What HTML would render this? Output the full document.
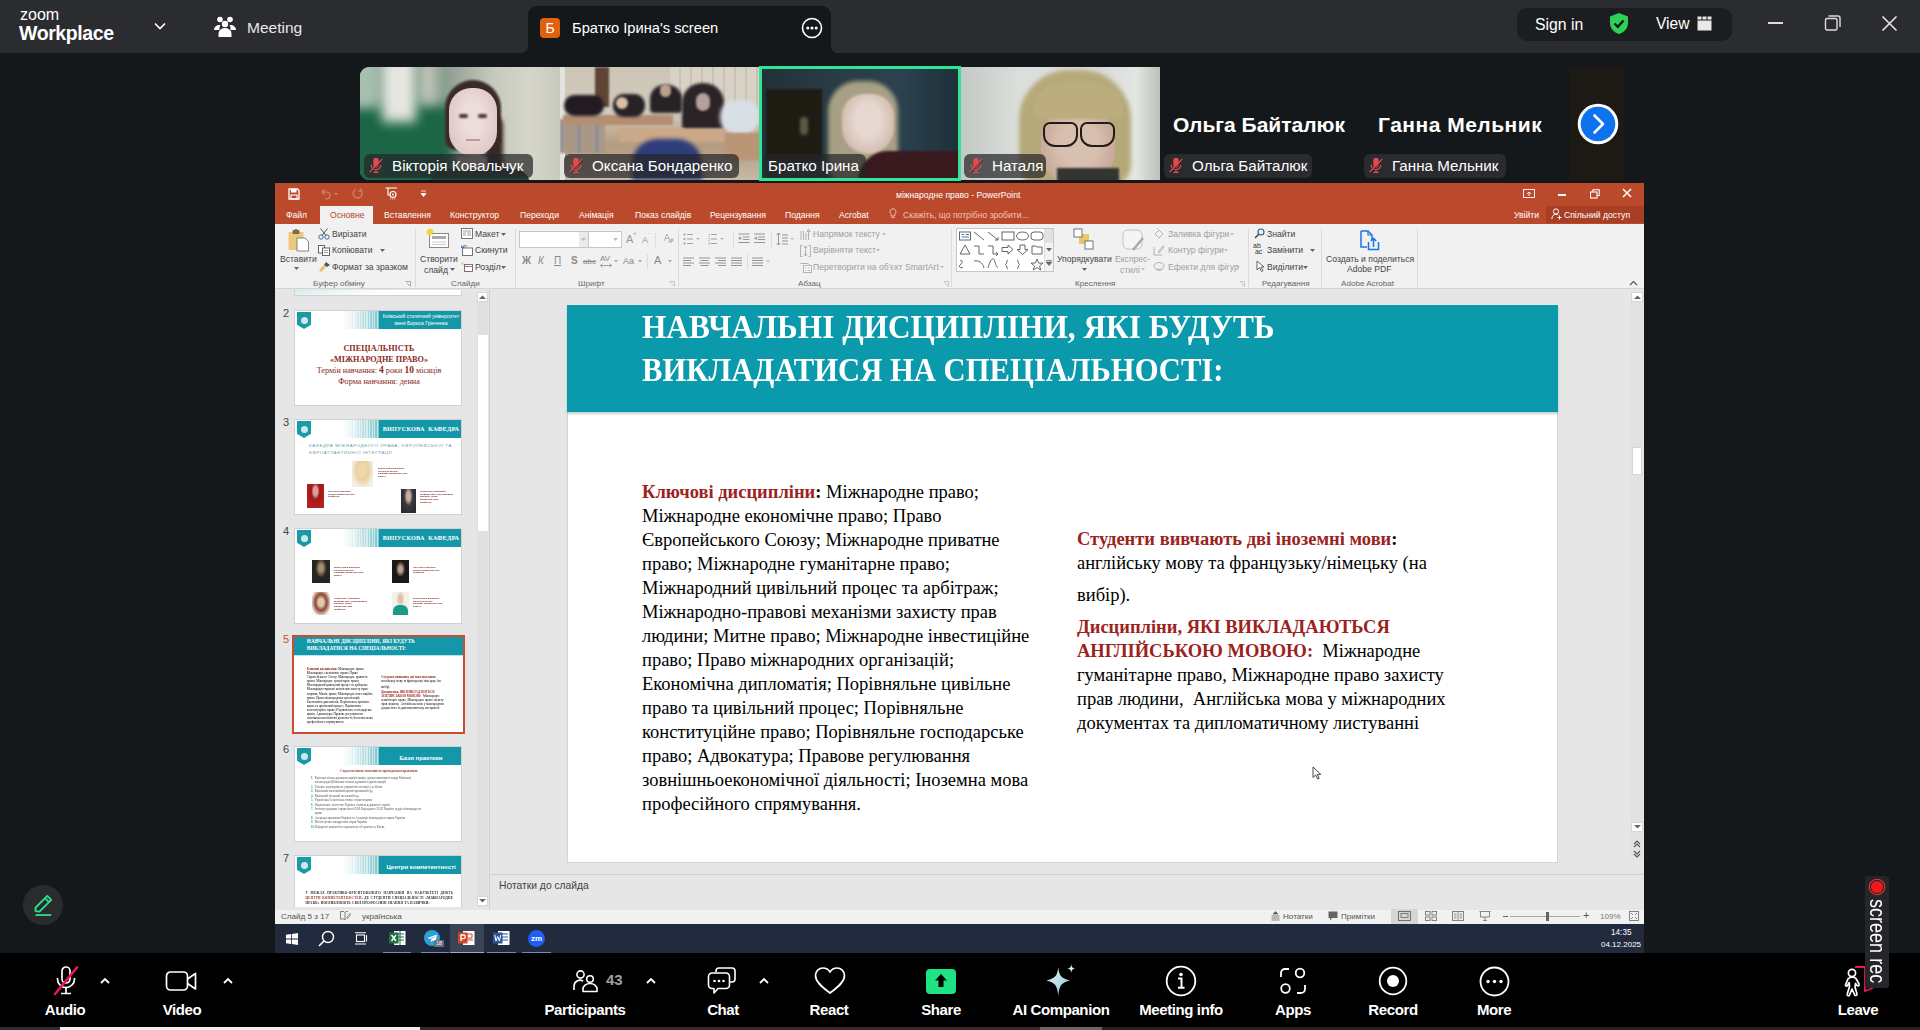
<!DOCTYPE html>
<html><head><meta charset="utf-8">
<style>
*{margin:0;padding:0;box-sizing:border-box}
html,body{width:1920px;height:1030px;overflow:hidden;background:#15181b;font-family:"Liberation Sans",sans-serif}
.a{position:absolute}
.t{position:absolute;white-space:nowrap;line-height:1.15}
#top{left:0;top:0;width:1920px;height:53px;background:#2b2c2f}
#tab{left:528px;top:6px;width:303px;height:47px;background:#15181b;border-radius:9px 9px 0 0}
.tile{position:absolute;top:67px;height:113px;width:200px;overflow:hidden}
.nm{position:absolute;height:24px;border-radius:6px;background:rgba(38,38,40,.72);color:#fff;font-size:15.2px;line-height:24px;padding-left:28px;white-space:nowrap;overflow:hidden}
.nm .mic{position:absolute;left:4px;top:4px;width:16px;height:16px}
#bot{left:0;top:953px;width:1920px;height:74px;background:#000}
.bl{position:absolute;top:1000px;color:#fff;font-size:15px;font-weight:bold;white-space:nowrap;transform:translateX(-50%);line-height:20px;letter-spacing:-0.4px}
.pt{font-size:8.6px}
.rb{font-size:8.6px;color:#444}
.gl{font-size:8.1px;color:#666}
.dis{color:#a0a0a0}
.sep{top:229px;width:1px;height:58px;background:#dadada}
.num{font-size:11px;color:#444}
.th{width:168px;height:96px;background:#fff;border:1px solid #d2d2d2;overflow:hidden}
.th .lg{position:absolute;left:2px;top:1px;width:14px;height:17px;background:#1a9aa8;clip-path:polygon(0 0,100% 0,100% 75%,50% 100%,0 75%)}
.th .lg::after{content:"";position:absolute;left:3.5px;top:5px;width:7px;height:7px;border-radius:50%;background:#cfe8ea}
.th .st{position:absolute;left:48px;top:0;width:36px;height:18px;background:repeating-linear-gradient(90deg,rgba(255,255,255,.55) 0 1.2px,rgba(255,255,255,0) 1.2px 2.6px),linear-gradient(90deg,#fff 0%,#d8eef0 35%,#7cc4cc 100%)}
.th .hb{position:absolute;left:84px;top:0;width:84px;height:18px;background:#1497a8;color:#fff;text-align:center;white-space:nowrap;overflow:hidden}
.tx{height:16px;background:repeating-linear-gradient(180deg,rgba(140,60,60,.55) 0 1px,transparent 1px 4px)}
.lines{background:repeating-linear-gradient(180deg,rgba(120,120,120,.6) 0 1px,transparent 1px 3.7px)}
.ttl{font-family:"Liberation Serif",serif;font-weight:bold;color:#fff;font-size:33.5px;letter-spacing:0px;line-height:40px}
.bd{font-family:"Liberation Serif",serif;font-size:18.5px;line-height:24px;color:#000;white-space:nowrap}
.bd b{font-weight:bold}
.red{color:#9c231d}
.sb{font-size:8.1px;color:#555}
</style></head><body>
<svg width="0" height="0" style="position:absolute"><defs><g id="micx"><path d="M6 2.5 a3 3 0 0 1 6 0 V8 a3 3 0 0 1 -6 0 Z" fill="#e5484d"/><path d="M3.5 7.5 a5.5 5.5 0 0 0 11 0 M9 13 V16 M6 16.3 H12" fill="none" stroke="#e5484d" stroke-width="1.4"/><path d="M2 16 L16 1.5" stroke="#e5484d" stroke-width="1.6"/><path d="M2.8 16.8 L16.8 2.3" stroke="rgba(38,38,40,.9)" stroke-width="1"/></g></defs></svg>
<!-- ===== ZOOM TOP BAR ===== -->
<div id="top" class="a"></div>
<div class="t" style="left:20px;top:6px;font-size:16px;color:#fff;letter-spacing:0px">zoom</div>
<div class="t" style="left:19px;top:22px;font-size:19.5px;color:#fff;font-weight:bold;letter-spacing:-0.4px">Workplace</div>
<svg class="a" style="left:153px;top:20px" width="14" height="12" viewBox="0 0 14 12"><path d="M2 3.5 L7 8.5 L12 3.5" stroke="#fff" stroke-width="1.6" fill="none"/></svg>
<svg class="a" style="left:213px;top:15px" width="24" height="24" viewBox="0 0 24 24"><g fill="#fff"><circle cx="7" cy="4.5" r="2.8"/><circle cx="17" cy="4.5" r="2.8"/><circle cx="12" cy="9" r="3.2"/><path d="M1 15c0-3 2.5-5 6-5h0.5c-0.6 0.9-1 2-1 3.5v1.5z"/><path d="M23 15c0-3-2.5-5-6-5h-0.5c0.6 0.9 1 2 1 3.5v1.5z"/><path d="M5.5 22v-3c0-3.5 2.8-6 6.5-6s6.5 2.5 6.5 6v3z"/></g></svg>
<div class="t" style="left:247px;top:19px;font-size:15.5px;color:#e8e8e8">Meeting</div>
<div id="tab" class="a"></div>
<div class="a" style="left:520px;top:45px;width:8px;height:8px;background:radial-gradient(circle at 0 0,#2b2c2f 8px,#15181b 8.5px)"></div>
<div class="a" style="left:831px;top:45px;width:8px;height:8px;background:radial-gradient(circle at 100% 0,#2b2c2f 8px,#15181b 8.5px)"></div>
<div class="a" style="left:540px;top:18px;width:20px;height:20px;border-radius:4px;background:#e0620f;color:#fff;font-size:14px;line-height:20px;text-align:center">Б</div>
<div class="t" style="left:572px;top:20px;font-size:14.7px;color:#fff">Братко Ірина's screen</div>
<svg class="a" style="left:801px;top:17px" width="22" height="22" viewBox="0 0 22 22"><circle cx="11" cy="11" r="9.5" stroke="#fff" stroke-width="1.6" fill="none"/><circle cx="6.8" cy="11" r="1.5" fill="#fff"/><circle cx="11" cy="11" r="1.5" fill="#fff"/><circle cx="15.2" cy="11" r="1.5" fill="#fff"/></svg>
<div class="a" style="left:1517px;top:8px;width:215px;height:33px;border-radius:10px;background:#1c1d20"></div>
<div class="t" style="left:1535px;top:16px;font-size:15.8px;color:#fff">Sign in</div>
<svg class="a" style="left:1608px;top:12px" width="22" height="23" viewBox="0 0 22 23"><path d="M11 1 L20 4.5 V11 C20 16.5 16 20.5 11 22 C6 20.5 2 16.5 2 11 V4.5 Z" fill="#2ed158"/><path d="M6.5 11.5 L9.8 14.8 L15.5 8.5" stroke="#111" stroke-width="2.2" fill="none"/></svg>
<div class="t" style="left:1656px;top:15px;font-size:15.6px;color:#fff">View</div>
<svg class="a" style="left:1697px;top:16px" width="15" height="15" viewBox="0 0 15 15"><rect x="0.5" y="4.5" width="14" height="10" fill="#e8e8e8"/><rect x="0.5" y="0.5" width="4" height="3" fill="#e8e8e8"/><rect x="5.5" y="0.5" width="4" height="3" fill="#e8e8e8"/><rect x="10.5" y="0.5" width="4" height="3" fill="#e8e8e8"/></svg>
<div class="a" style="left:1768px;top:22px;width:15px;height:1.5px;background:#ddd"></div>
<svg class="a" style="left:1824px;top:14px" width="18" height="18" viewBox="0 0 18 18"><rect x="1.5" y="4.5" width="11.5" height="11.5" rx="1.5" stroke="#ddd" stroke-width="1.4" fill="none"/><path d="M4.5 2 H14 a2 2 0 0 1 2 2 V13" stroke="#ddd" stroke-width="1.4" fill="none"/></svg>
<svg class="a" style="left:1881px;top:15px" width="17" height="17" viewBox="0 0 17 17"><path d="M1.5 1.5 L15.5 15.5 M15.5 1.5 L1.5 15.5" stroke="#e6e6e6" stroke-width="1.6"/></svg>

<!-- ===== VIDEO STRIP ===== -->
<div class="tile" style="left:360px;border-radius:9px 0 0 9px;background:linear-gradient(90deg,#7a9c8a 0%,#5c8a72 30%,#9aa69a 48%,#c6c9bd 66%,#d6d5c9 85%,#c8cabe 100%)">
  <div class="a" style="left:-12px;top:38px;width:105px;height:95px;background:#1b6646;filter:blur(6px)"></div>
  <div class="a" style="left:-12px;top:-10px;width:30px;height:50px;background:#a8c0b0;filter:blur(6px)"></div>
  <div class="a" style="left:22px;top:-10px;width:34px;height:65px;background:#e6e6e0;filter:blur(6px)"></div>
  <div class="a" style="left:58px;top:-8px;width:20px;height:45px;background:#bcc2b6;filter:blur(6px)"></div>
  <div class="a" style="left:85px;top:13px;width:56px;height:70px;border-radius:28px 28px 10px 10px;background:#3c2a28;filter:blur(1px)"></div>
  <div class="a" style="left:125px;top:50px;width:18px;height:60px;border-radius:8px;background:#3a2826;filter:blur(2px)"></div>
  <div class="a" style="left:89px;top:21px;width:48px;height:68px;border-radius:24px 24px 26px 26px;background:radial-gradient(ellipse at 50% 45%,#ecdcdc 30%,#dcc4c0 85%);filter:blur(0.6px)"></div>
  <div class="a" style="left:97px;top:90px;width:30px;height:15px;background:#d8c0bc;filter:blur(1px)"></div>
  <div class="a" style="left:99px;top:47px;width:9px;height:4px;border-radius:3px;background:#4a3434;filter:blur(0.8px)"></div>
  <div class="a" style="left:118px;top:47px;width:9px;height:4px;border-radius:3px;background:#4a3434;filter:blur(0.8px)"></div>
  <div class="a" style="left:106px;top:72px;width:14px;height:2px;background:#c09898;filter:blur(0.6px)"></div>
  <div class="a" style="left:70px;top:102px;width:100px;height:16px;border-radius:40px 40px 0 0;background:#24403a"></div>
</div>
<div class="tile" style="left:560px;background:linear-gradient(180deg,#cdc5b6 0%,#d2cbbd 40%,#c4b09a 55%,#b49a80 70%,#c6baa8 100%)">
  <div class="a" style="left:0;top:0;width:5px;height:113px;background:#e2e2de"></div>
  <div class="a" style="left:110px;top:0;width:90px;height:48px;background:repeating-linear-gradient(90deg,#d8d2c6 0 9px,#c8c1b4 9px 11px)"></div>
  <div class="a" style="left:35px;top:0;width:14px;height:40px;background:#5e4434;filter:blur(1px)"></div>
  <div class="a" style="left:0px;top:52px;width:45px;height:34px;background:repeating-linear-gradient(90deg,#8088a0 0 2px,#a89888 2px 18px);filter:blur(1px)"></div>
  <div class="a" style="left:3px;top:48px;width:110px;height:10px;background:#b48e72;filter:blur(1px)"></div>
  <div class="a" style="left:4px;top:28px;width:40px;height:21px;border-radius:11px;background:#221c22;filter:blur(1.5px)"></div>
  <div class="a" style="left:53px;top:27px;width:32px;height:23px;border-radius:11px;background:#262226;filter:blur(1.5px)"></div>
  <div class="a" style="left:56px;top:30px;width:12px;height:12px;border-radius:6px;background:#d8c0a8;filter:blur(1px)"></div>
  <div class="a" style="left:90px;top:18px;width:32px;height:28px;border-radius:14px 14px 4px 4px;background:#262226;filter:blur(1.5px)"></div>
  <div class="a" style="left:100px;top:17px;width:11px;height:13px;border-radius:6px;background:#bca090;filter:blur(1px)"></div>
  <div class="a" style="left:122px;top:16px;width:42px;height:50px;border-radius:20px 20px 8px 8px;background:#2a2428;filter:blur(1.5px)"></div>
  <div class="a" style="left:136px;top:26px;width:14px;height:18px;border-radius:7px;background:#b8a09a;filter:blur(1px)"></div>
  <div class="a" style="left:160px;top:33px;width:40px;height:34px;border-radius:16px;background:#d8dfe6;filter:blur(2px)"></div>
  <div class="a" style="left:60px;top:61px;width:105px;height:14px;background:#caa888;filter:blur(1px)"></div>
  <div class="a" style="left:165px;top:66px;width:35px;height:27px;background:#b89676;filter:blur(1px)"></div>
  <div class="a" style="left:72px;top:72px;width:70px;height:41px;border-radius:25px 25px 0 0;background:#2e3e7a;filter:blur(2px)"></div>
</div>
<div class="a" style="left:759px;top:66px;width:202px;height:115px;border:3px solid #2fe596;background:linear-gradient(90deg,#223238 0%,#2a3c46 40%,#2c4250 70%,#1e3038 100%);overflow:hidden">
  <div class="a" style="left:4px;top:20px;width:56px;height:72px;background:#1e1c12;filter:blur(1px)"></div>
  <div class="a" style="left:38px;top:48px;width:8px;height:18px;border-radius:4px;background:#5a5a44;filter:blur(1.5px)"></div>
  <div class="a" style="left:66px;top:12px;width:70px;height:100px;border-radius:30px 30px 14px 14px;background:#a8a084;filter:blur(2px)"></div>
  <div class="a" style="left:80px;top:25px;width:52px;height:60px;border-radius:22px 22px 26px 26px;background:radial-gradient(ellipse at 50% 45%,#e6d8d0 35%,#cdb4a4 85%);filter:blur(1px)"></div>
  <div class="a" style="left:96px;top:82px;width:115px;height:40px;border-radius:30px 0 0 0;background:#3a1a1e;filter:blur(1px)"></div>
</div>
<div class="tile" style="left:961px;width:199px;background:linear-gradient(90deg,#c4c8c4 0%,#dcdfdb 30%,#d6dad6 70%,#e4e6e2 88%,#bdbfbb 100%)">
  <div class="a" style="left:58px;top:3px;width:112px;height:118px;border-radius:50px 50px 24px 24px;background:#b6a979;filter:blur(2px)"></div>
  <div class="a" style="left:80px;top:42px;width:74px;height:78px;border-radius:30px 30px 36px 36px;background:radial-gradient(ellipse at 50% 45%,#d8c0b0 35%,#c2a290 85%)"></div>
  <div class="a" style="left:72px;top:16px;width:90px;height:36px;border-radius:40px 40px 12px 12px;background:#bcad7e;filter:blur(1px)"></div>
  <div class="a" style="left:82px;top:55px;width:35px;height:25px;border:2.5px solid #241b18;border-radius:7px 7px 12px 12px"></div>
  <div class="a" style="left:119px;top:55px;width:35px;height:25px;border:2.5px solid #241b18;border-radius:7px 7px 12px 12px"></div>
  <div class="a" style="left:96px;top:101px;width:62px;height:14px;background:#343432;filter:blur(1px)"></div>
</div>
<div class="t" style="left:1173px;top:113px;font-size:21px;font-weight:bold;color:#fff">Ольга Байталюк</div>
<div class="t" style="left:1378px;top:113px;font-size:21px;font-weight:bold;color:#fff;letter-spacing:0.5px">Ганна Мельник</div>
<div class="a" style="left:1570px;top:67px;width:54px;height:113px;background:#1d1915"></div>
<svg class="a" style="left:1576px;top:102px" width="44" height="44" viewBox="0 0 44 44"><circle cx="22" cy="22" r="20.3" fill="#fff"/><circle cx="22" cy="22" r="17.3" fill="#0e72ed"/><g transform="translate(1,1)"><path d="M17.5 12.5 L26 21 L17.5 29.5" stroke="#fff" stroke-width="2.6" fill="none" stroke-linecap="round" stroke-linejoin="round"/></g></svg>
<!-- name labels -->
<div class="nm" style="left:364px;top:154px;width:169px"><svg class="mic" viewBox="0 0 18 18"><use href="#micx"/></svg>Вікторія Ковальчук</div>
<div class="nm" style="left:564px;top:154px;width:175px">Оксана Бондаренко<svg class="mic" viewBox="0 0 18 18"><use href="#micx"/></svg></div>
<div class="nm" style="left:764px;top:154px;width:102px;padding-left:4px">Братко Ірина</div>
<div class="nm" style="left:964px;top:154px;width:82px">Наталя<svg class="mic" viewBox="0 0 18 18"><use href="#micx"/></svg></div>
<div class="nm" style="left:1164px;top:154px;width:148px;background:#2a2b2e">Ольга Байталюк<svg class="mic" viewBox="0 0 18 18"><use href="#micx"/></svg></div>
<div class="nm" style="left:1364px;top:154px;width:142px;background:#2a2b2e">Ганна Мельник<svg class="mic" viewBox="0 0 18 18"><use href="#micx"/></svg></div>
<!-- ===== POWERPOINT ===== -->
<div class="a" style="left:275px;top:183px;width:1369px;height:741px;background:#e6e6e6"></div>
<div class="a" style="left:275px;top:183px;width:1369px;height:41px;background:#bb4a2d"></div>
<!-- QAT -->
<svg class="a" style="left:288px;top:188px" width="12" height="12" viewBox="0 0 12 12"><path d="M1 1 H9.5 L11 2.5 V11 H1 Z" fill="none" stroke="#fff" stroke-width="1.3"/><rect x="3" y="1" width="5.5" height="3.5" fill="#fff"/><rect x="3" y="7" width="6" height="4" fill="none" stroke="#fff" stroke-width="1.1"/></svg>
<svg class="a" style="left:319px;top:188px" width="22" height="12" viewBox="0 0 22 12"><path d="M3 4 H7.5 a3.5 3.5 0 0 1 0 7 H6 M3 4 L5.5 1.5 M3 4 L5.5 6.5" fill="none" stroke="#d9836c" stroke-width="1.2"/><path d="M15 5 L17 7 L19 5 Z" fill="#d9836c"/></svg>
<svg class="a" style="left:352px;top:187px" width="12" height="13" viewBox="0 0 12 13"><path d="M9 3.5 A4.5 4.5 0 1 1 4 2.2 M9 1 V4 H6" fill="none" stroke="#d9836c" stroke-width="1.2"/></svg>
<svg class="a" style="left:385px;top:187px" width="13" height="13" viewBox="0 0 13 13"><path d="M0.5 1 H12 M3 1 V8 H4.5" fill="none" stroke="#fff" stroke-width="1.1"/><circle cx="8" cy="7.5" r="3" fill="none" stroke="#fff" stroke-width="1.1"/><circle cx="8" cy="7.5" r="1" fill="#fff"/><path d="M5 12 H11" stroke="#fff" stroke-width="0.8" stroke-dasharray="1 1"/></svg>
<svg class="a" style="left:420px;top:190px" width="7" height="8" viewBox="0 0 7 8"><path d="M1 1 H6 M1 3.5 L3.5 6.5 L6 3.5 Z" fill="#fff" stroke="#fff" stroke-width="0.8"/></svg>
<div class="t" style="left:896px;top:191px;font-size:8.6px;color:#fff">міжнародне право - PowerPoint</div>
<svg class="a" style="left:1523px;top:189px" width="12" height="10" viewBox="0 0 12 10"><rect x="0.5" y="0.5" width="11" height="8" fill="none" stroke="#fff" stroke-width="0.9"/><path d="M6 7 V3 M4 5 L6 3 L8 5" fill="none" stroke="#fff" stroke-width="0.9"/></svg>
<div class="a" style="left:1558px;top:194px;width:8px;height:1.5px;background:#fff"></div>
<svg class="a" style="left:1590px;top:189px" width="10" height="10" viewBox="0 0 10 10"><rect x="0.5" y="3" width="6.5" height="6" fill="none" stroke="#fff" stroke-width="1.1"/><path d="M3 3 V0.8 H9.2 V6.5 H7" fill="none" stroke="#fff" stroke-width="1.1"/></svg>
<svg class="a" style="left:1622px;top:188px" width="10" height="10" viewBox="0 0 10 10"><path d="M1 1 L9 9 M9 1 L1 9" stroke="#fff" stroke-width="1.5"/></svg>
<!-- tabs -->
<div class="a" style="left:320px;top:206px;width:53px;height:18px;background:#f1f1f1"></div>
<div class="t pt" style="left:286px;top:211px;color:#fff">Файл</div>
<div class="t pt" style="left:330px;top:211px;color:#b7472a">Основне</div>
<div class="t pt" style="left:384px;top:211px;color:#fff">Вставлення</div>
<div class="t pt" style="left:450px;top:211px;color:#fff">Конструктор</div>
<div class="t pt" style="left:520px;top:211px;color:#fff">Переходи</div>
<div class="t pt" style="left:579px;top:211px;color:#fff">Анімація</div>
<div class="t pt" style="left:635px;top:211px;color:#fff">Показ слайдів</div>
<div class="t pt" style="left:710px;top:211px;color:#fff">Рецензування</div>
<div class="t pt" style="left:785px;top:211px;color:#fff">Подання</div>
<div class="t pt" style="left:839px;top:211px;color:#fff">Acrobat</div>
<svg class="a" style="left:889px;top:208px" width="8" height="11" viewBox="0 0 8 11"><path d="M4 0.8 a3 3 0 0 1 1.8 5.4 V8 H2.2 V6.2 A3 3 0 0 1 4 0.8 Z M2.5 9.5 H5.5" fill="none" stroke="#f2c7b8" stroke-width="0.9"/></svg>
<div class="t pt" style="left:903px;top:211px;color:#f2c4b4">Скажіть, що потрібно зробити...</div>
<div class="t pt" style="left:1514px;top:211px;color:#fff">Увійти</div>
<div class="a" style="left:1546px;top:206px;width:98px;height:17px;background:#a83f25"></div>
<svg class="a" style="left:1551px;top:208px" width="11" height="12" viewBox="0 0 11 12"><circle cx="5" cy="3.5" r="2.6" fill="none" stroke="#fff" stroke-width="1"/><path d="M0.8 11 C1 7.5 3 6.3 5 6.3 C6 6.3 6.8 6.5 7.3 6.9 M6.5 9.5 H10.5 M8.5 7.5 V11.5" fill="none" stroke="#fff" stroke-width="1"/></svg>
<div class="t pt" style="left:1564px;top:211px;color:#fff">Спільний доступ</div>
<!-- ribbon -->
<div class="a" style="left:275px;top:224px;width:1369px;height:65px;background:#f1f1f1;border-bottom:1px solid #d4d4d4"></div>
<div class="a sep" style="left:415px"></div>
<div class="a sep" style="left:515px"></div>
<div class="a sep" style="left:678px"></div>
<div class="a sep" style="left:951px"></div>
<div class="a sep" style="left:1248px"></div>
<div class="a sep" style="left:1321px"></div>
<div class="a sep" style="left:1417px"></div>
<!-- Clipboard group -->
<svg class="a" style="left:287px;top:228px" width="24" height="24" viewBox="0 0 24 24"><rect x="1.5" y="4" width="15" height="18" rx="1" fill="#ebc97a"/><rect x="5.5" y="2" width="7" height="4" rx="1" fill="#7a6a50"/><circle cx="9" cy="2.2" r="1.3" fill="#7a6a50"/><path d="M10 10 H18 L21.5 13.5 V23 H10 Z" fill="#fff" stroke="#777" stroke-width="0.9"/></svg>
<div class="t rb" style="left:280px;top:255px">Вставити</div>
<svg class="a" style="left:294px;top:267px" width="5" height="4"><path d="M0 0 H5 L2.5 3 Z" fill="#666"/></svg>
<svg class="a" style="left:318px;top:228px" width="12" height="12" viewBox="0 0 12 12"><circle cx="3" cy="9" r="2.2" fill="none" stroke="#3a6ea8" stroke-width="1"/><circle cx="9" cy="9" r="2.2" fill="none" stroke="#3a6ea8" stroke-width="1"/><path d="M4 7.5 L9.5 0.5 M8 7.5 L2.5 0.5" stroke="#555" stroke-width="1"/></svg>
<div class="t rb" style="left:332px;top:230px">Вирізати</div>
<svg class="a" style="left:318px;top:245px" width="12" height="11" viewBox="0 0 12 11"><rect x="0.5" y="0.5" width="6" height="7.5" fill="#fff" stroke="#555" stroke-width="0.9"/><rect x="4.5" y="3" width="7" height="7.5" fill="#fff" stroke="#555" stroke-width="0.9"/><path d="M6 5.5 H10 M6 7.5 H10" stroke="#777" stroke-width="0.7"/></svg>
<div class="t rb" style="left:332px;top:246px">Копіювати</div>
<svg class="a" style="left:380px;top:249px" width="5" height="4"><path d="M0 0 H5 L2.5 3 Z" fill="#666"/></svg>
<svg class="a" style="left:319px;top:261px" width="12" height="11" viewBox="0 0 12 11"><path d="M7 1 L11 4 L8 6 L5 4 Z" fill="#555"/><path d="M6 5 L1 10" stroke="#e8c06a" stroke-width="3"/></svg>
<div class="t rb" style="left:332px;top:263px">Формат за зразком</div>
<div class="t gl" style="left:313px;top:279px">Буфер обміну</div>
<svg class="a" style="left:405px;top:281px" width="6" height="6"><path d="M0.5 0.5 H5.5 V5.5 M1.5 1.5 L5 5" fill="none" stroke="#999" stroke-width="0.8"/></svg>
<!-- Slides group -->
<svg class="a" style="left:426px;top:228px" width="24" height="20" viewBox="0 0 24 20"><rect x="3.5" y="5.5" width="19" height="14" fill="#fff" stroke="#888" stroke-width="1"/><rect x="6" y="8" width="14" height="3" fill="#aaa"/><path d="M6 14 H20 M6 16.5 H20" stroke="#bbb" stroke-width="0.8"/><circle cx="4" cy="4" r="3" fill="#f6d23a"/><path d="M4 0 V8 M0 4 H8 M1 1 L7 7 M7 1 L1 7" stroke="#f6d23a" stroke-width="0.8"/></svg>
<div class="t rb" style="left:420px;top:255px">Створити</div>
<div class="t rb" style="left:424px;top:266px">слайд</div>
<svg class="a" style="left:450px;top:268px" width="5" height="4"><path d="M0 0 H5 L2.5 3 Z" fill="#666"/></svg>
<svg class="a" style="left:461px;top:228px" width="12" height="11" viewBox="0 0 12 11"><rect x="0.5" y="0.5" width="11" height="10" fill="#fff" stroke="#666" stroke-width="0.9"/><path d="M2 3 H10 M2 5 H5 M6 5 H10 M2 7 H5 M6 7 H10" stroke="#888" stroke-width="0.8"/></svg>
<div class="t rb" style="left:475px;top:230px">Макет</div>
<svg class="a" style="left:501px;top:233px" width="5" height="4"><path d="M0 0 H5 L2.5 3 Z" fill="#666"/></svg>
<svg class="a" style="left:461px;top:245px" width="12" height="11" viewBox="0 0 12 11"><rect x="1.5" y="3" width="10" height="7.5" fill="#fff" stroke="#666" stroke-width="0.9"/><path d="M1 3 A3 3 0 0 1 6 1.5 M1 3 L0.5 0.5 M1 3 L3.5 2.5" fill="none" stroke="#2a6ab0" stroke-width="1"/></svg>
<div class="t rb" style="left:475px;top:246px">Скинути</div>
<svg class="a" style="left:461px;top:261px" width="12" height="11" viewBox="0 0 12 11"><rect x="3.5" y="3.5" width="8" height="7" fill="#fff" stroke="#666" stroke-width="0.9"/><path d="M3 5.5 H11" stroke="#c0504d" stroke-width="0.9"/><path d="M0.5 1.5 L2.5 3.5" stroke="#e8c06a" stroke-width="1.2"/></svg>
<div class="t rb" style="left:475px;top:263px">Розділ</div>
<svg class="a" style="left:501px;top:266px" width="5" height="4"><path d="M0 0 H5 L2.5 3 Z" fill="#666"/></svg>
<div class="t gl" style="left:451px;top:279px">Слайди</div>
<!-- Font group -->
<div class="a" style="left:519px;top:231px;width:70px;height:17px;background:#fff;border:1px solid #c6c6c6"></div>
<div class="a" style="left:579px;top:232px;width:9px;height:15px;background:#eaeaea"></div>
<div class="a" style="left:588px;top:231px;width:34px;height:17px;background:#fff;border:1px solid #c6c6c6"></div>
<svg class="a" style="left:581px;top:238px" width="5" height="4"><path d="M0 0 H5 L2.5 3 Z" fill="#bbb"/></svg>
<svg class="a" style="left:613px;top:238px" width="5" height="4"><path d="M0 0 H5 L2.5 3 Z" fill="#bbb"/></svg>
<div class="t" style="left:626px;top:233px;font-size:11px;color:#9a9a9a">A</div><div class="t" style="left:633px;top:230px;font-size:6px;color:#9a9a9a">+</div>
<div class="t" style="left:642px;top:235px;font-size:9px;color:#9a9a9a">A</div><div class="t" style="left:648px;top:230px;font-size:6px;color:#9a9a9a">-</div>
<svg class="a" style="left:663px;top:233px" width="11" height="11" viewBox="0 0 11 11"><path d="M1 8 L4 1 L7 8 M2.2 5.5 H5.8" fill="none" stroke="#aaa" stroke-width="0.9"/><path d="M5 9 L9 5 L11 7 L8 10 Z" fill="#bbb"/></svg>
<div class="a" style="left:655px;top:233px;width:1px;height:14px;background:#dcdcdc"></div>
<div class="t" style="left:522px;top:255px;font-size:10px;color:#8a8a8a;font-weight:bold">Ж</div>
<div class="t" style="left:538px;top:255px;font-size:10px;color:#8a8a8a;font-style:italic">К</div>
<div class="t" style="left:554px;top:255px;font-size:10px;color:#8a8a8a;text-decoration:underline">П</div>
<div class="t" style="left:571px;top:255px;font-size:10px;color:#8a8a8a;font-weight:bold">S</div>
<div class="t" style="left:583px;top:257px;font-size:8px;color:#8a8a8a;text-decoration:line-through">abc</div>
<div class="t" style="left:600px;top:254px;font-size:8px;color:#8a8a8a">AV</div>
<svg class="a" style="left:600px;top:263px" width="12" height="5" viewBox="0 0 12 5"><path d="M0.5 2.5 H11.5 M0.5 2.5 L2.5 0.5 M0.5 2.5 L2.5 4.5 M11.5 2.5 L9.5 0.5 M11.5 2.5 L9.5 4.5" fill="none" stroke="#8a8a8a" stroke-width="0.8"/></svg>
<svg class="a" style="left:614px;top:260px" width="4" height="3"><path d="M0 0 H4 L2 2.5 Z" fill="#aaa"/></svg>
<div class="t" style="left:623px;top:256px;font-size:9px;color:#8a8a8a">Aa</div>
<svg class="a" style="left:638px;top:260px" width="4" height="3"><path d="M0 0 H4 L2 2.5 Z" fill="#aaa"/></svg>
<div class="a" style="left:647px;top:254px;width:1px;height:15px;background:#dcdcdc"></div>
<div class="t" style="left:654px;top:254px;font-size:11px;color:#8a8a8a">A</div>
<svg class="a" style="left:668px;top:260px" width="4" height="3"><path d="M0 0 H4 L2 2.5 Z" fill="#aaa"/></svg>
<div class="t gl" style="left:578px;top:279px">Шрифт</div>
<svg class="a" style="left:669px;top:281px" width="6" height="6"><path d="M0.5 0.5 H5.5 V5.5 M1.5 1.5 L5 5" fill="none" stroke="#bbb" stroke-width="0.8"/></svg>
<!-- Paragraph group -->
<svg class="a" style="left:683px;top:233px" width="50" height="12" viewBox="0 0 50 12"><g fill="#999"><circle cx="1.5" cy="1.5" r="1"/><circle cx="1.5" cy="6" r="1"/><circle cx="1.5" cy="10.5" r="1"/></g><path d="M4 1.5 H10 M4 6 H10 M4 10.5 H10" stroke="#999" stroke-width="0.9"/><path d="M13 5 L15 7 L17 5 Z" fill="#bbb"/><g fill="#999" font-size="4" font-family="Liberation Sans"><text x="25" y="3.5">1</text><text x="25" y="8">2</text><text x="25" y="12">3</text></g><path d="M28 1.5 H34 M28 6 H34 M28 10.5 H34" stroke="#999" stroke-width="0.9"/><path d="M37 5 L39 7 L41 5 Z" fill="#bbb"/></svg>
<div class="a" style="left:733px;top:233px;width:1px;height:14px;background:#dcdcdc"></div>
<svg class="a" style="left:738px;top:233px" width="28" height="11" viewBox="0 0 28 11"><path d="M0.5 1 H11.5 M5 4 H11.5 M5 6.5 H11.5 M0.5 9.5 H11.5 M4 5.2 H1 M2.5 3.5 L0.8 5.2 L2.5 7" fill="none" stroke="#8a8a8a" stroke-width="0.9"/><path d="M16 1 H27 M20 4 H27 M20 6.5 H27 M16 9.5 H27 M16 5.2 H19 M17.5 3.5 L19.2 5.2 L17.5 7" fill="none" stroke="#8a8a8a" stroke-width="0.9"/></svg>
<div class="a" style="left:771px;top:233px;width:1px;height:14px;background:#dcdcdc"></div>
<svg class="a" style="left:776px;top:232px" width="18" height="14" viewBox="0 0 18 14"><path d="M2.5 1 V13 M0.5 3 L2.5 1 L4.5 3 M0.5 11 L2.5 13 L4.5 11 M6 3 H12 M6 6 H12 M6 9 H12 M6 12 H12" fill="none" stroke="#8a8a8a" stroke-width="0.9"/><path d="M14 6 L16 8 L18 6 Z" fill="#bbb"/></svg>
<svg class="a" style="left:683px;top:257px" width="62" height="9" viewBox="0 0 62 9"><path d="M0 1 H11 M0 3.5 H8 M0 6 H11 M0 8.5 H8" stroke="#8a8a8a" stroke-width="0.9"/><path d="M16 1 H27 M17.5 3.5 H25.5 M16 6 H27 M17.5 8.5 H25.5" stroke="#8a8a8a" stroke-width="0.9"/><path d="M32 1 H43 M35 3.5 H43 M32 6 H43 M35 8.5 H43" stroke="#8a8a8a" stroke-width="0.9"/><path d="M48 1 H59 M48 3.5 H59 M48 6 H59 M48 8.5 H59" stroke="#8a8a8a" stroke-width="0.9"/></svg>
<div class="a" style="left:747px;top:254px;width:1px;height:15px;background:#dcdcdc"></div>
<svg class="a" style="left:752px;top:257px" width="20" height="9" viewBox="0 0 20 9"><path d="M0 1 H11 M0 3.5 H11 M0 6 H11 M0 8.5 H11" stroke="#8a8a8a" stroke-width="0.9"/><path d="M14 3.5 L16 5.5 L18 3.5 Z" fill="#bbb"/></svg>
<svg class="a" style="left:800px;top:228px" width="11" height="13" viewBox="0 0 11 13"><path d="M1 3 V12 M3.5 3 V12 M6 5 V12 M8.5 1 L7 3.5 H10 Z M8.5 3.5 V12" fill="none" stroke="#aaa" stroke-width="0.9"/></svg>
<div class="t rb dis" style="left:813px;top:230px">Напрямок тексту</div>
<svg class="a" style="left:882px;top:233px" width="4" height="3"><path d="M0 0 H4 L2 2.5 Z" fill="#bbb"/></svg>
<svg class="a" style="left:800px;top:245px" width="11" height="12" viewBox="0 0 11 12"><path d="M2.5 0.5 H0.5 V11.5 H2.5 M8.5 0.5 H10.5 V11.5 H8.5 M5.5 1 V11 M3.8 3 L5.5 1 L7.2 3 M3.8 9 L5.5 11 L7.2 9" fill="none" stroke="#aaa" stroke-width="0.9"/></svg>
<div class="t rb dis" style="left:813px;top:246px">Вирівняти текст</div>
<svg class="a" style="left:876px;top:249px" width="4" height="3"><path d="M0 0 H4 L2 2.5 Z" fill="#bbb"/></svg>
<svg class="a" style="left:800px;top:261px" width="12" height="12" viewBox="0 0 12 12"><rect x="3.5" y="4.5" width="8" height="7" fill="#fff" stroke="#aaa" stroke-width="0.9"/><path d="M0.5 2.5 H8 L9.5 4 M5 7 H6.5 M7.5 7 H10 M5 9.5 H6.5 M7.5 9.5 H10" fill="none" stroke="#aaa" stroke-width="0.9"/></svg>
<div class="t rb dis" style="left:813px;top:263px">Перетворити на об'єкт SmartArt</div>
<svg class="a" style="left:940px;top:266px" width="4" height="3"><path d="M0 0 H4 L2 2.5 Z" fill="#bbb"/></svg>
<div class="t gl" style="left:798px;top:279px">Абзац</div>
<svg class="a" style="left:943px;top:281px" width="6" height="6"><path d="M0.5 0.5 H5.5 V5.5 M1.5 1.5 L5 5" fill="none" stroke="#bbb" stroke-width="0.8"/></svg>
<!-- Drawing group -->
<div class="a" style="left:956px;top:228px;width:98px;height:44px;background:#fff;border:1px solid #c6c6c6"></div>
<div class="a" style="left:1044px;top:229px;width:9px;height:42px;background:#f4f4f4;border-left:1px solid #dcdcdc"></div>
<div class="a" style="left:1045px;top:229px;width:8px;height:14px;background:#e2e2e2"></div>
<svg class="a" style="left:957px;top:229px" width="96" height="42" viewBox="0 0 96 42"><g fill="none" stroke="#555" stroke-width="0.9">
<rect x="2.5" y="3" width="11" height="8"/><path d="M4.5 5.5 H7 M8.5 5.5 H12 M4.5 8 H12" stroke="#2a6ab0"/>
<path d="M17 3 L27 11"/><path d="M31 3 L41 11 M41 11 V8 M41 11 H38"/>
<rect x="45" y="3" width="12" height="8"/><ellipse cx="65.5" cy="7" rx="6" ry="4"/><rect x="74" y="3" width="12" height="8" rx="3"/>
<path d="M3 25 L8 16 L13 25 Z"/><path d="M17 17 H22 V25 H27"/><path d="M31 17 H36 V25 H41 M41 25 L39 23 M41 25 L39 27"/>
<path d="M45 18.5 H51 V16 L56 20.5 L51 25 V22.5 H45 Z"/><path d="M63 16 H68 V20.5 H71 L65.5 25.5 L60 20.5 H63 Z"/><path d="M75 17 H79 L80 18 H85 V25 H75 Z"/>
<path d="M3 32 C6 30 6 34 3 36 C1 38 4 40 6 38"/><path d="M17 32 C22 31 26 34 27 39"/><path d="M31 39 C34 28 37 28 38 33 C39 37 40 38 41 39"/>
<path d="M51 31 C49.5 31 50 35 48.5 35.5 C50 36 49.5 40 51 40"/><path d="M60 31 C61.5 31 61 35 62.5 35.5 C61 36 61.5 40 60 40"/>
<path d="M80 30 L81.6 34 L86 34.2 L82.5 37 L83.8 41 L80 38.6 L76.2 41 L77.5 37 L74 34.2 L78.4 34 Z"/></g></svg>
<svg class="a" style="left:1046px;top:248px" width="6" height="4"><path d="M0 0 H6 L3 3.5 Z" fill="#666"/></svg>
<svg class="a" style="left:1046px;top:260px" width="6" height="6"><path d="M0 0.5 H6 M0 2 H6 L3 5.5 Z" fill="#666" stroke="#666" stroke-width="0.7"/></svg>
<svg class="a" style="left:1073px;top:228px" width="22" height="23" viewBox="0 0 22 23"><rect x="6" y="6" width="10" height="10" fill="#e3c86c"/><rect x="1" y="1" width="8" height="8" fill="#fff" stroke="#666" stroke-width="0.9"/><rect x="12" y="13" width="8" height="8" fill="#fff" stroke="#666" stroke-width="0.9"/></svg>
<div class="t rb" style="left:1057px;top:255px">Упорядкувати</div>
<svg class="a" style="left:1082px;top:268px" width="5" height="4"><path d="M0 0 H5 L2.5 3 Z" fill="#666"/></svg>
<svg class="a" style="left:1122px;top:229px" width="23" height="22" viewBox="0 0 23 22"><rect x="1" y="1" width="19" height="19" rx="5" fill="#f8f4f6" stroke="#bbb" stroke-width="0.9"/><path d="M21 9 L11 21" stroke="#aaa" stroke-width="2.5"/></svg>
<div class="t rb dis" style="left:1115px;top:255px">Експрес-</div>
<div class="t rb dis" style="left:1120px;top:266px">стилі</div>
<svg class="a" style="left:1141px;top:268px" width="4" height="3"><path d="M0 0 H4 L2 2.5 Z" fill="#bbb"/></svg>
<svg class="a" style="left:1153px;top:228px" width="12" height="12" viewBox="0 0 12 12"><path d="M2 6 L6 2 L10 6 L6 10 Z M5 1 L3 -1" fill="none" stroke="#aaa" stroke-width="0.9"/></svg>
<div class="t rb dis" style="left:1168px;top:230px">Заливка фігури</div>
<svg class="a" style="left:1230px;top:233px" width="4" height="3"><path d="M0 0 H4 L2 2.5 Z" fill="#bbb"/></svg>
<svg class="a" style="left:1153px;top:244px" width="12" height="12" viewBox="0 0 12 12"><path d="M1 3 V11 H9 M5 8 L10 2 L11 3 L6 9 Z" fill="none" stroke="#aaa" stroke-width="0.9"/></svg>
<div class="t rb dis" style="left:1168px;top:246px">Контур фігури</div>
<svg class="a" style="left:1224px;top:249px" width="4" height="3"><path d="M0 0 H4 L2 2.5 Z" fill="#bbb"/></svg>
<svg class="a" style="left:1153px;top:261px" width="12" height="11" viewBox="0 0 12 11"><ellipse cx="6" cy="5" rx="5" ry="3.5" fill="#eee" stroke="#aaa" stroke-width="0.9"/><path d="M2 8 C4 10 8 10 10 8" fill="none" stroke="#bbb" stroke-width="0.9"/></svg>
<div class="t rb dis" style="left:1168px;top:263px">Ефекти для фігур</div>
<svg class="a" style="left:1236px;top:266px" width="4" height="3"><path d="M0 0 H4 L2 2.5 Z" fill="#bbb"/></svg>
<div class="t gl" style="left:1075px;top:279px">Креслення</div>
<svg class="a" style="left:1239px;top:281px" width="6" height="6"><path d="M0.5 0.5 H5.5 V5.5 M1.5 1.5 L5 5" fill="none" stroke="#bbb" stroke-width="0.8"/></svg>
<!-- Editing group -->
<svg class="a" style="left:1254px;top:228px" width="11" height="11" viewBox="0 0 11 11"><circle cx="7" cy="4" r="3" fill="none" stroke="#2a5a96" stroke-width="1.1"/><path d="M5 6 L1 10" stroke="#444" stroke-width="1.4"/></svg>
<div class="t rb" style="left:1267px;top:230px">Знайти</div>
<div class="t" style="left:1253px;top:243px;font-size:7px;color:#333;line-height:6px">ab<br>&nbsp;ac</div>
<div class="t rb" style="left:1267px;top:246px">Замінити</div>
<svg class="a" style="left:1310px;top:249px" width="5" height="4"><path d="M0 0 H5 L2.5 3 Z" fill="#666"/></svg>
<svg class="a" style="left:1256px;top:260px" width="9" height="12" viewBox="0 0 9 12"><path d="M1 1 V10 L3.5 7.5 L5.5 11.5 L7 10.8 L5 7 H8 Z" fill="#fff" stroke="#555" stroke-width="0.9"/></svg>
<div class="t rb" style="left:1267px;top:263px">Виділити</div>
<svg class="a" style="left:1303px;top:266px" width="5" height="4"><path d="M0 0 H5 L2.5 3 Z" fill="#666"/></svg>
<div class="t gl" style="left:1262px;top:279px">Редагування</div>
<!-- Acrobat -->
<svg class="a" style="left:1360px;top:230px" width="20" height="21" viewBox="0 0 20 21"><path d="M1 1 H8 L12 5 V10 M1 1 V17 H7" fill="none" stroke="#1a73e8" stroke-width="1.5"/><path d="M8 1 V5 H12" fill="none" stroke="#1a73e8" stroke-width="1.2"/><path d="M8.5 12 V19.5 H18.5 V12 M13.5 17 V8.5 M10.8 11 L13.5 8.3 L16.2 11" fill="none" stroke="#1a73e8" stroke-width="1.5"/></svg>
<div class="t rb" style="left:1326px;top:255px">Создать и поделиться</div>
<div class="t rb" style="left:1347px;top:265px">Adobe PDF</div>
<div class="t gl" style="left:1341px;top:279px">Adobe Acrobat</div>
<svg class="a" style="left:1629px;top:280px" width="9" height="6"><path d="M1 5 L4.5 1.5 L8 5" fill="none" stroke="#555" stroke-width="1.1"/></svg>
<!-- ===== thumbnails pane ===== -->
<div class="a" style="left:275px;top:290px;width:215px;height:619px;background:#e6e6e6;overflow:hidden">
  <div class="a" style="left:19px;top:-90px;width:168px;height:96px;background:#fff;border:1px solid #d2d2d2"><div class="a" style="left:0;bottom:0;width:100%;height:12px;background:linear-gradient(170deg,#d8eef0 20%,#fff 60%)"></div></div>
</div>
<div class="a" style="left:489px;top:290px;width:1px;height:619px;background:#d0d0d0"></div>
<!-- scrollbar -->
<div class="a" style="left:477px;top:292px;width:11px;height:615px;background:#e0e0e0"></div>
<div class="a" style="left:477px;top:292px;width:11px;height:10px;background:#fff;border:1px solid #d6d6d6"></div>
<svg class="a" style="left:479px;top:295px" width="7" height="4"><path d="M0 4 L3.5 0.5 L7 4 Z" fill="#666"/></svg>
<div class="a" style="left:478px;top:335px;width:10px;height:196px;background:#fff"></div>
<div class="a" style="left:477px;top:896px;width:11px;height:10px;background:#fff;border:1px solid #d6d6d6"></div>
<svg class="a" style="left:479px;top:899px" width="7" height="4"><path d="M0 0 L3.5 3.5 L7 0 Z" fill="#666"/></svg>

<div class="t num" style="left:283px;top:307px">2</div>
<div class="a th" style="left:294px;top:310px">
  <div class="lg"></div><div class="st"></div><div class="hb" style="font-size:5px;line-height:7px;padding-top:2px">Київський столичний університет<br>імені Бориса Грінченка</div>
  <div class="a" style="left:0;top:33px;width:168px;text-align:center;font-family:'Liberation Serif',serif;color:#8a2a22;font-size:8.2px;line-height:10.5px;font-weight:bold">СПЕЦІАЛЬНІСТЬ<br>«МІЖНАРОДНЕ  ПРАВО»</div>
  <div class="a" style="left:0;top:54px;width:168px;text-align:center;font-family:'Liberation Serif',serif;color:#8a2a22;font-size:8.2px;line-height:10.5px">Термін  навчання: <b style="font-size:9.5px">4</b> роки <b style="font-size:9.5px">10</b> місяців<br>Форма  навчання: денна</div>
</div>

<div class="t num" style="left:283px;top:416px">3</div>
<div class="a th" style="left:294px;top:419px">
  <div class="lg"></div><div class="st"></div><div class="hb" style="font-family:'Liberation Serif',serif;font-size:6.2px;line-height:17px;font-weight:bold;letter-spacing:0.2px">ВИПУСКОВА&nbsp; КАФЕДРА</div>
  <div class="a" style="left:14px;top:23px;font-size:4.4px;line-height:6.5px;color:#6a9aa8;letter-spacing:0.6px;white-space:nowrap">КАФЕДРА МІЖНАРОДНОГО ПРАВА, ЄВРОПЕЙСЬКОЇ ТА<br>ЄВРОАТЛАНТИЧНОЇ ІНТЕГРАЦІЇ</div>
  <div class="a" style="left:57px;top:41px;width:21px;height:26px;background:radial-gradient(ellipse at 50% 35%,#f0d8a8 25%,#e8d0a0 40%,#f4efe6 75%)"></div>
  <div class="a" style="left:83px;top:47px;width:240px;font-size:13px;line-height:16px;color:#7a2020;font-weight:bold;transform-origin:0 0;transform:scale(0.17)">Братко Ірина Василівна<br>Заступник декана<br>Кандидат юридичних наук,<br>доцент</div>
  <div class="a" style="left:12px;top:64px;width:17px;height:24px;background:radial-gradient(ellipse at 50% 30%,#d8a090 18%,#a01818 35%,#b82020 80%)"></div>
  <div class="a" style="left:33px;top:70px;width:240px;font-size:13px;line-height:16px;color:#7a2020;font-weight:bold;transform-origin:0 0;transform:scale(0.17)">Тіхо Ольга Заставна<br>Доктор юридичних наук<br>Професор</div>
  <div class="a" style="left:106px;top:69px;width:15px;height:24px;background:radial-gradient(ellipse at 50% 30%,#c8b0a0 18%,#3a3a40 40%,#2a2a30 80%)"></div>
  <div class="a" style="left:125px;top:70px;width:240px;font-size:13px;line-height:16px;color:#7a2020;font-weight:bold;transform-origin:0 0;transform:scale(0.17)">Гуцало Ігор Андрійович<br>кандидат наук, з міжнародних<br>відносин, декан<br>юридичних наук<br>Професор</div>
</div>

<div class="t num" style="left:283px;top:525px">4</div>
<div class="a th" style="left:294px;top:528px">
  <div class="lg"></div><div class="st"></div><div class="hb" style="font-family:'Liberation Serif',serif;font-size:6.2px;line-height:17px;font-weight:bold;letter-spacing:0.2px">ВИПУСКОВА&nbsp; КАФЕДРА</div>
  <div class="a" style="left:17px;top:31px;width:18px;height:23px;background:radial-gradient(ellipse at 50% 35%,#a89070 15%,#2a2420 45%)"></div>
  <div class="a" style="left:39px;top:37px;width:240px;font-size:13px;line-height:16px;color:#7a2020;font-weight:bold;transform-origin:0 0;transform:scale(0.17)">Братко Ірина Василівна<br>Заступник декана<br>Кандидат юридичних наук,<br>доцент</div>
  <div class="a" style="left:97px;top:31px;width:17px;height:23px;background:radial-gradient(ellipse at 50% 40%,#c0a090 15%,#1a1818 40%)"></div>
  <div class="a" style="left:118px;top:37px;width:240px;font-size:13px;line-height:16px;color:#7a2020;font-weight:bold;transform-origin:0 0;transform:scale(0.17)">Тіхо Ольга Заставна<br>Доктор юридичних наук<br>Професор</div>
  <div class="a" style="left:17px;top:63px;width:18px;height:23px;background:radial-gradient(ellipse at 50% 45%,#e8c8b0 20%,#8a4a30 45%,#faf6f2 80%)"></div>
  <div class="a" style="left:39px;top:68px;width:240px;font-size:13px;line-height:16px;color:#7a2020;font-weight:bold;transform-origin:0 0;transform:scale(0.17)">Гуцало Ігор Андрійович<br>кандидат наук, з міжнародних<br>відносин, декан<br>юридичних наук<br>Професор</div>
  <div class="a" style="left:97px;top:63px;width:17px;height:23px;background:radial-gradient(ellipse at 50% 30%,#e0c0a8 15%,#f4f0ea 35%),linear-gradient(#fff,#fff)"><div class="a" style="left:1px;bottom:0;width:15px;height:10px;border-radius:6px 6px 0 0;background:#1a9a88"></div></div>
  <div class="a" style="left:118px;top:68px;width:240px;font-size:13px;line-height:16px;color:#7a2020;font-weight:bold;transform-origin:0 0;transform:scale(0.17)">Братко Ірина Василівна<br>Заступник декана<br>Кандидат юридичних наук,<br>доцент</div>
</div>

<div class="a" style="left:292px;top:635px;width:173px;height:99px;border:2px solid #c84f2e"></div>
<div class="t num" style="left:283px;top:633px;color:#c84f2e">5</div>
<div class="a" style="left:294px;top:637px;width:169px;height:95px;background:#fff;overflow:hidden">
 <div class="a" style="left:0;top:0;width:990px;height:557px;transform-origin:0 0;transform:scale(0.1707)">
  <div class="a" style="left:0;top:0;width:990px;height:107px;background:#1497a8"></div>
  <div class="t ttl" style="left:75px;top:2px;transform-origin:0 0;transform:scaleX(0.934)">НАВЧАЛЬНІ ДИСЦИПЛІНИ, ЯКІ БУДУТЬ</div>
  <div class="t ttl" style="left:75px;top:45px;transform-origin:0 0;transform:scaleX(0.914)">ВИКЛАДАТИСЯ НА СПЕЦІАЛЬНОСТІ:</div>
  <div class="a bd" style="left:75px;top:175px;width:400px">
<div><b class="red">Ключові дисципліни</b><b>:</b> Міжнародне право;</div>
<div>Міжнародне економічне право; Право</div>
<div>Європейського Союзу; Міжнародне приватне</div>
<div>право; Міжнародне гуманітарне право;</div>
<div>Міжнародний цивільний процес та арбітраж;</div>
<div>Міжнародно-правові механізми захисту прав</div>
<div>людини; Митне право; Міжнародне інвестиційне</div>
<div>право; Право міжнародних організацій;</div>
<div>Економічна дипломатія; Порівняльне цивільне</div>
<div>право та цивільний процес; Порівняльне</div>
<div>конституційне право; Порівняльне господарське</div>
<div>право; Адвокатура; Правове регулювання</div>
<div>зовнішньоекономічної діяльності; Іноземна мова</div>
<div>професійного спрямування.</div>
  </div>
  <div class="a bd" style="left:510px;top:222px;width:420px">
<div><b class="red">Студенти вивчають дві іноземні мови</b><b>:</b></div>
<div>англійську мову та французьку/німецьку (на</div>
<div style="margin-top:8px">вибір).</div>
<div style="margin-top:8px"><b class="red">Дисципліни, ЯКІ ВИКЛАДАЮТЬСЯ</b></div>
<div><b class="red">АНГЛІЙСЬКОЮ МОВОЮ:</b>&nbsp; Міжнародне</div>
<div>гуманітарне право, Міжнародне право захисту</div>
<div>прав людини,&nbsp; Англійська мова у міжнародних</div>
<div>документах та дипломатичному листуванні</div>
  </div>
 </div>
</div>

<div class="t num" style="left:283px;top:743px">6</div>
<div class="a th" style="left:294px;top:746px">
  <div class="lg"></div><div class="st"></div><div class="hb" style="font-size:6px;line-height:12px;padding-top:5px;font-weight:bold">Бази практики</div>
  <div class="a" style="left:0;top:0;width:990px;height:557px;transform-origin:0 0;transform:scale(0.1697)">
    <div class="a" style="left:0;top:128px;width:990px;text-align:center;font-family:'Liberation Serif',serif;font-weight:bold;font-size:19px;color:#9c3a3a">Студенти мають можливість проходження практики:</div>
    <div class="a" style="left:95px;top:170px;font-family:'Liberation Serif',serif;font-size:17.5px;line-height:26px;color:#555"><div style="white-space:nowrap"><span style="display:inline-block;width:22px;color:#1a9aa8;font-weight:bold">1.</span>Київська міська державна адміністрація, органи виконавчої влади Київської</div><div style="white-space:nowrap"><span style="display:inline-block;width:22px;color:#1a9aa8;font-weight:bold"></span>міської ради (Київської міської державної адміністрації)</div><div style="white-space:nowrap"><span style="display:inline-block;width:22px;color:#1a9aa8;font-weight:bold">2.</span>Головне територіальне управління юстиції у м. Києві</div><div style="white-space:nowrap"><span style="display:inline-block;width:22px;color:#1a9aa8;font-weight:bold">3.</span>Київський апеляційний адміністративний суд</div><div style="white-space:nowrap"><span style="display:inline-block;width:22px;color:#1a9aa8;font-weight:bold">4.</span>Київський місцевий загальний суд</div><div style="white-space:nowrap"><span style="display:inline-block;width:22px;color:#1a9aa8;font-weight:bold">5.</span>Українська Гельсінська спілка з прав людини</div><div style="white-space:nowrap"><span style="display:inline-block;width:22px;color:#1a9aa8;font-weight:bold">6.</span>Національне агентство України з питань державної служби</div><div style="white-space:nowrap"><span style="display:inline-block;width:22px;color:#1a9aa8;font-weight:bold">7.</span>Інститут держави і права імені В.М. Корецького НАН України, відділ міжнародного</div><div style="white-space:nowrap"><span style="display:inline-block;width:22px;color:#1a9aa8;font-weight:bold"></span>права</div><div style="white-space:nowrap"><span style="display:inline-block;width:22px;color:#1a9aa8;font-weight:bold">8.</span>Асоціація правників України та Асоціація міжнародного права України</div><div style="white-space:nowrap"><span style="display:inline-block;width:22px;color:#1a9aa8;font-weight:bold">9.</span>Міністерство закордонних справ України</div><div style="white-space:nowrap"><span style="display:inline-block;width:22px;color:#1a9aa8;font-weight:bold">10.</span>Юридичні компанії та адвокатські об'єднання м. Києва</div></div>
  </div>
</div>

<div class="t num" style="left:283px;top:852px">7</div>
<div class="a th" style="left:294px;top:855px;height:60px">
  <div class="lg"></div><div class="st"></div><div class="hb" style="font-size:6px;line-height:12px;padding-top:5px;font-weight:bold">Центри компетентності</div>
  <div class="a" style="left:0;top:0;width:990px;height:557px;transform-origin:0 0;transform:scale(0.1697)">
    <div class="a" style="left:62px;top:200px;width:870px;font-family:'Liberation Serif',serif;font-size:19px;line-height:30px;color:#222;font-weight:bold;text-align:justify;letter-spacing:1.5px">У МЕЖАХ ПРАКТИКО-ОРІЄНТОВАНОГО НАВЧАННЯ НА ФАКУЛЬТЕТІ ДІЮТЬ <b style="color:#9c2a2a">ЦЕНТРИ КОМПЕТЕНТНОСТЕЙ</b>, ДЕ СТУДЕНТИ СПЕЦІАЛЬНОСТІ «МІЖНАРОДНЕ ПРАВО» ПОГЛИБЛЮЮТЬ СВОЇ ПРОФЕСІЙНІ ЗНАННЯ ТА НАВИЧКИ:</div>
  </div>
</div>
<div class="a" style="left:275px;top:907px;width:200px;height:3px;background:#e6e6e6"></div>
<!-- ===== main slide ===== -->
<div class="a" style="left:567px;top:305px;width:991px;height:558px;background:#fff;border:1px solid #d4d4d4"></div>
<div class="a" style="left:567px;top:305px;width:991px;height:107px;background:#0b9aab;box-shadow:0 1.5px 2px rgba(60,90,100,.28)"></div>
<div class="t ttl" style="left:642px;top:307px;transform-origin:0 0;transform:scaleX(0.934)">НАВЧАЛЬНІ ДИСЦИПЛІНИ, ЯКІ БУДУТЬ</div>
<div class="t ttl" style="left:642px;top:350px;transform-origin:0 0;transform:scaleX(0.914)">ВИКЛАДАТИСЯ НА СПЕЦІАЛЬНОСТІ:</div>
<div class="a bd" style="left:642px;top:480px;width:400px">
<div><b class="red">Ключові дисципліни</b><b>:</b> Міжнародне право;</div>
<div>Міжнародне економічне право; Право</div>
<div>Європейського Союзу; Міжнародне приватне</div>
<div>право; Міжнародне гуманітарне право;</div>
<div>Міжнародний цивільний процес та арбітраж;</div>
<div>Міжнародно-правові механізми захисту прав</div>
<div>людини; Митне право; Міжнародне інвестиційне</div>
<div>право; Право міжнародних організацій;</div>
<div>Економічна дипломатія; Порівняльне цивільне</div>
<div>право та цивільний процес; Порівняльне</div>
<div>конституційне право; Порівняльне господарське</div>
<div>право; Адвокатура; Правове регулювання</div>
<div>зовнішньоекономічної діяльності; Іноземна мова</div>
<div>професійного спрямування.</div>
</div>
<div class="a bd" style="left:1077px;top:527px;width:420px">
<div><b class="red">Студенти вивчають дві іноземні мови</b><b>:</b></div>
<div>англійську мову та французьку/німецьку (на</div>
<div style="margin-top:8px">вибір).</div>
<div style="margin-top:8px"><b class="red">Дисципліни, ЯКІ ВИКЛАДАЮТЬСЯ</b></div>
<div><b class="red">АНГЛІЙСЬКОЮ МОВОЮ:</b>&nbsp; Міжнародне</div>
<div>гуманітарне право, Міжнародне право захисту</div>
<div>прав людини,&nbsp; Англійська мова у міжнародних</div>
<div>документах та дипломатичному листуванні</div>
</div>
<!-- mouse cursor -->
<svg class="a" style="left:1312px;top:766px" width="10" height="14" viewBox="0 0 10 14"><path d="M1 1 V11.5 L3.6 9 L5.6 13 L7.2 12.3 L5.3 8.4 H8.8 Z" fill="#fff" stroke="#333" stroke-width="0.9"/></svg>
<!-- right scrollbar -->
<div class="a" style="left:1631px;top:292px;width:12px;height:568px;background:#e2e2e2"></div>
<div class="a" style="left:1631px;top:292px;width:12px;height:10px;background:#fff;border:1px solid #d6d6d6"></div>
<svg class="a" style="left:1634px;top:295px" width="7" height="4"><path d="M0 4 L3.5 0.5 L7 4 Z" fill="#666"/></svg>
<div class="a" style="left:1632px;top:447px;width:10px;height:28px;background:#fff;border:1px solid #d6d6d6"></div>
<div class="a" style="left:1631px;top:822px;width:12px;height:10px;background:#fff;border:1px solid #d6d6d6"></div>
<svg class="a" style="left:1634px;top:825px" width="7" height="4"><path d="M0 0 L3.5 3.5 L7 0 Z" fill="#666"/></svg>
<svg class="a" style="left:1633px;top:840px" width="8" height="18" viewBox="0 0 8 18"><path d="M1 4 L4 1 L7 4 M1 7 L4 4 L7 7" fill="none" stroke="#555" stroke-width="1.1"/><path d="M1 11 L4 14 L7 11 M1 14 L4 17 L7 14" fill="none" stroke="#555" stroke-width="1.1"/></svg>
<!-- notes pane -->
<div class="a" style="left:491px;top:874px;width:1153px;height:1px;background:#cfcfcf"></div>
<div class="t" style="left:499px;top:880px;font-size:10.3px;color:#444">Нотатки до слайда</div>
<!-- status bar -->
<div class="a" style="left:275px;top:910px;width:1369px;height:14px;background:#f1f1f1"></div>
<div class="t sb" style="left:281px;top:912px">Слайд 5 з 17</div>
<svg class="a" style="left:340px;top:910px" width="11" height="11" viewBox="0 0 11 11"><path d="M0.5 1.5 H4 L5 2.5 V10 L4 9 H0.5 Z M5 2.5 L6 1.5 H8" fill="none" stroke="#666" stroke-width="0.8"/><path d="M6.5 8 L10 3.5 L10.8 4.3 L7.3 8.8 Z" fill="none" stroke="#666" stroke-width="0.7"/></svg>
<div class="t sb" style="left:362px;top:912px">українська</div>
<svg class="a" style="left:1271px;top:911px" width="9" height="10" viewBox="0 0 9 10"><path d="M4.5 0.5 L2 3 H7 Z M0.5 5 H8.5 M0.5 7 H8.5 M0.5 9 H8.5" fill="#666" stroke="#666" stroke-width="0.8"/></svg>
<div class="t sb" style="left:1283px;top:912px">Нотатки</div>
<svg class="a" style="left:1328px;top:911px" width="10" height="10" viewBox="0 0 10 10"><path d="M0.5 0.5 H9.5 V7 H4 L2 9.5 V7 H0.5 Z" fill="#666"/></svg>
<div class="t sb" style="left:1341px;top:912px">Примітки</div>
<div class="a" style="left:1391px;top:909px;width:27px;height:15px;background:#d6d6d6"></div>
<svg class="a" style="left:1398px;top:911px" width="13" height="10" viewBox="0 0 13 10"><rect x="0.5" y="0.5" width="12" height="9" fill="none" stroke="#666" stroke-width="0.9"/><rect x="3" y="2.5" width="7" height="4" fill="none" stroke="#666" stroke-width="0.8"/></svg>
<svg class="a" style="left:1425px;top:911px" width="12" height="10" viewBox="0 0 12 10"><rect x="0.5" y="0.5" width="4.5" height="3.5" fill="none" stroke="#777" stroke-width="0.9"/><rect x="7" y="0.5" width="4.5" height="3.5" fill="none" stroke="#777" stroke-width="0.9"/><rect x="0.5" y="6" width="4.5" height="3.5" fill="none" stroke="#777" stroke-width="0.9"/><rect x="7" y="6" width="4.5" height="3.5" fill="none" stroke="#777" stroke-width="0.9"/></svg>
<svg class="a" style="left:1452px;top:911px" width="12" height="10" viewBox="0 0 12 10"><rect x="0.5" y="0.5" width="11" height="9" fill="none" stroke="#777" stroke-width="0.9"/><path d="M6 0.5 V9.5 M2 3 H4.5 M2 5 H4.5 M2 7 H4.5 M7.5 3 H10 M7.5 5 H10 M7.5 7 H10" stroke="#777" stroke-width="0.8"/></svg>
<svg class="a" style="left:1479px;top:911px" width="12" height="10" viewBox="0 0 12 10"><path d="M0.5 0.5 H11.5 M1.5 0.5 V6 H10.5 V0.5 M6 6 V9 M4 9.5 H8" fill="none" stroke="#777" stroke-width="0.9"/></svg>
<div class="a" style="left:1503px;top:916px;width:5px;height:1.3px;background:#666"></div>
<div class="a" style="left:1510px;top:916px;width:70px;height:1px;background:#a8a8a8"></div>
<div class="a" style="left:1546px;top:912px;width:3px;height:9px;background:#666"></div>
<div class="t" style="left:1583px;top:909px;font-size:11px;color:#555">+</div>
<div class="t sb" style="left:1600px;top:912px;color:#777">109%</div>
<svg class="a" style="left:1629px;top:911px" width="10" height="10" viewBox="0 0 10 10"><rect x="0.5" y="0.5" width="9" height="9" fill="none" stroke="#777" stroke-width="0.9"/><path d="M2 2 L4 4 M8 2 L6 4 M2 8 L4 6 M8 8 L6 6" stroke="#777" stroke-width="0.9"/></svg>
<!-- windows taskbar -->
<div class="a" style="left:275px;top:924px;width:1369px;height:29px;background:#222a3e"></div>
<div class="a" style="left:450px;top:924px;width:34px;height:29px;background:#3a4256"></div>
<svg class="a" style="left:286px;top:933px" width="12" height="12" viewBox="0 0 12 12"><path d="M0 1.7 L5 1 V5.6 H0 Z M5.8 0.9 L12 0 V5.6 H5.8 Z M0 6.4 H5 V11 L0 10.3 Z M5.8 6.4 H12 V12 L5.8 11.1 Z" fill="#fff"/></svg>
<svg class="a" style="left:318px;top:930px" width="17" height="17" viewBox="0 0 17 17"><circle cx="10" cy="7" r="5.5" fill="none" stroke="#fff" stroke-width="1.4"/><path d="M6 11 L1 16" stroke="#fff" stroke-width="1.6"/></svg>
<svg class="a" style="left:354px;top:932px" width="14" height="13" viewBox="0 0 14 13"><rect x="2.5" y="3" width="8" height="6.5" fill="none" stroke="#fff" stroke-width="1.1"/><path d="M1 0.8 H12 M1 12 H12 M12.5 3 V9.5" stroke="#fff" stroke-width="1.1"/></svg>
<svg class="a" style="left:389px;top:930px" width="17" height="16" viewBox="0 0 17 16"><rect x="5" y="1" width="11.5" height="14" fill="#fff"/><path d="M8 4 H15 M8 7 H15 M8 10 H15 M11 1 V15" stroke="#1d6f42" stroke-width="1"/><rect x="0" y="2.5" width="9.5" height="11" fill="#1d6f42"/><path d="M2.5 5 L7 11 M7 5 L2.5 11" stroke="#fff" stroke-width="1.4"/></svg>
<div class="a" style="left:424px;top:930px;width:16px;height:16px;border-radius:50%;background:#2a9fd8"></div>
<svg class="a" style="left:427px;top:934px" width="11" height="9" viewBox="0 0 11 9"><path d="M0.5 4 L10 0.5 L8.5 8.5 L5.5 6.5 L4 8 L4 5.5 L9 1.5 L3 5 Z" fill="#fff"/></svg>
<div class="a" style="left:434px;top:940px;width:10px;height:7px;background:#6a7080;border-radius:1px;font-size:5px;color:#fff;line-height:7px;text-align:center">18</div>
<svg class="a" style="left:458px;top:930px" width="17" height="16" viewBox="0 0 17 16"><rect x="5" y="1" width="11.5" height="14" fill="#fff"/><path d="M9 4 H14 V8 H9 Z M9 10 H15" stroke="#d24726" stroke-width="1" fill="none"/><rect x="0" y="2.5" width="9.5" height="11" fill="#d24726"/><path d="M3 11 V5 H5.5 A1.8 1.8 0 0 1 5.5 8.6 H3" fill="none" stroke="#fff" stroke-width="1.3"/></svg>
<svg class="a" style="left:493px;top:930px" width="17" height="16" viewBox="0 0 17 16"><rect x="5" y="1" width="11.5" height="14" fill="#fff"/><path d="M9 4 H15 M9 7 H15 M9 10 H15" stroke="#2b579a" stroke-width="1"/><rect x="0" y="2.5" width="9.5" height="11" fill="#2b579a"/><path d="M1.8 5 L3 11 L4.7 6.5 L6.4 11 L7.7 5" fill="none" stroke="#fff" stroke-width="1"/></svg>
<div class="a" style="left:528px;top:930px;width:17px;height:17px;border-radius:50%;background:#1d5ff0;color:#fff;font-size:8px;font-weight:bold;line-height:17px;text-align:center">zm</div>
<div class="a" style="left:383px;top:952px;width:28px;height:1px;background:#7a8ab0"></div>
<div class="a" style="left:421px;top:952px;width:28px;height:1px;background:#7a8ab0"></div>
<div class="a" style="left:450px;top:952px;width:34px;height:1px;background:#9aaad0"></div>
<div class="a" style="left:487px;top:952px;width:29px;height:1px;background:#7a8ab0"></div>
<div class="a" style="left:522px;top:952px;width:29px;height:1px;background:#7a8ab0"></div>
<div class="t" style="left:1611px;top:928px;font-size:8.2px;color:#fff">14:35</div>
<div class="t" style="left:1601px;top:940px;font-size:8px;color:#fff">04.12.2025</div>
<!-- ===== BOTTOM TOOLBAR ===== -->
<div id="bot" class="a"></div>
<div class="a" style="left:0;top:1027px;width:60px;height:3px;background:#2a3038"></div>
<div class="a" style="left:60px;top:1027px;width:360px;height:3px;background:#eeeeee"></div>
<div class="a" style="left:420px;top:1027px;width:620px;height:3px;background:#3a2a2e"></div>
<div class="a" style="left:1040px;top:1027px;width:62px;height:3px;background:#6a6668"></div>
<div class="a" style="left:1102px;top:1027px;width:818px;height:3px;background:#2a2022"></div>
<div class="a" style="left:23px;top:885px;width:40px;height:40px;border-radius:50%;background:#2a2b2d"></div>
<svg class="a" style="left:31px;top:892px" width="27" height="27" viewBox="0 0 24 24"><path d="M4 17 L4 14 L14.5 3.5 L18 7 L7.5 17.5 Z M12.5 5.5 L16 9" stroke="#2ee08f" stroke-width="1.6" fill="none" stroke-linejoin="round"/><path d="M4 20.5 H18" stroke="#2ee08f" stroke-width="1.6"/></svg>

<svg class="a" style="left:50px;top:965px" width="32" height="32" viewBox="0 0 32 32"><rect x="12" y="2" width="8" height="16" rx="4" stroke="#fff" stroke-width="1.7" fill="none"/><path d="M7.5 13 V14 a8.5 8.5 0 0 0 17 0 V13" stroke="#fff" stroke-width="1.7" fill="none"/><path d="M16 22.5 V28 M11 28.5 H21" stroke="#fff" stroke-width="1.7"/><path d="M5 29 L27 2.5" stroke="#e8175d" stroke-width="2.6" stroke-linecap="round"/></svg>
<svg class="a" style="left:99px;top:977px" width="12" height="8" viewBox="0 0 12 8"><path d="M2 6 L6 2 L10 6" stroke="#fff" stroke-width="1.8" fill="none"/></svg>
<div class="bl" style="left:65px">Audio</div>
<svg class="a" style="left:165px;top:969px" width="34" height="26" viewBox="0 0 34 26"><rect x="1.5" y="3" width="21" height="18" rx="4" stroke="#fff" stroke-width="1.7" fill="none"/><path d="M22.5 10 L30.5 4.5 V20 L22.5 14.5" stroke="#fff" stroke-width="1.7" fill="none" stroke-linejoin="round"/></svg>
<svg class="a" style="left:222px;top:977px" width="12" height="8" viewBox="0 0 12 8"><path d="M2 6 L6 2 L10 6" stroke="#fff" stroke-width="1.8" fill="none"/></svg>
<div class="bl" style="left:182px">Video</div>

<svg class="a" style="left:572px;top:969px" width="26" height="26" viewBox="0 0 26 26"><circle cx="8.5" cy="5.5" r="3.6" stroke="#fff" stroke-width="1.6" fill="none"/><circle cx="18" cy="10" r="3.3" stroke="#fff" stroke-width="1.6" fill="none"/><path d="M2 21 V17 a6 6 0 0 1 9 -5" stroke="#fff" stroke-width="1.6" fill="none"/><path d="M11 22.5 V20 a7 5.5 0 0 1 14 0 V22.5 Z" stroke="#fff" stroke-width="1.6" fill="none" stroke-linejoin="round"/></svg>
<div class="t" style="left:606px;top:971px;font-size:15px;font-weight:bold;color:#a0a0a0">43</div>
<svg class="a" style="left:645px;top:977px" width="12" height="8" viewBox="0 0 12 8"><path d="M2 6 L6 2 L10 6" stroke="#fff" stroke-width="1.8" fill="none"/></svg>
<div class="bl" style="left:585px">Participants</div>
<svg class="a" style="left:707px;top:966px" width="30" height="30" viewBox="0 0 30 30"><path d="M9 6.5 V5 a3 3 0 0 1 3-3 H25 a3 3 0 0 1 3 3 V13 a3 3 0 0 1 -3 3 H23" stroke="#fff" stroke-width="1.6" fill="none"/><path d="M5 7 H19 a3.5 3.5 0 0 1 3.5 3.5 V19 a3.5 3.5 0 0 1 -3.5 3.5 H11 L7 27 V22.5 H5 a3.5 3.5 0 0 1 -3.5 -3.5 V10.5 a3.5 3.5 0 0 1 3.5 -3.5 Z" stroke="#fff" stroke-width="1.6" fill="none" stroke-linejoin="round"/><circle cx="7.5" cy="15" r="1.3" fill="#fff"/><circle cx="12" cy="15" r="1.3" fill="#fff"/><circle cx="16.5" cy="15" r="1.3" fill="#fff"/></svg>
<svg class="a" style="left:758px;top:977px" width="12" height="8" viewBox="0 0 12 8"><path d="M2 6 L6 2 L10 6" stroke="#fff" stroke-width="1.8" fill="none"/></svg>
<div class="bl" style="left:723px">Chat</div>
<svg class="a" style="left:813px;top:966px" width="34" height="30" viewBox="0 0 34 30"><path d="M17 27 C12 23 2.5 17 2.5 9.5 C2.5 5 6 2 10 2 C13 2 15.5 3.5 17 6 C18.5 3.5 21 2 24 2 C28 2 31.5 5 31.5 9.5 C31.5 17 22 23 17 27 Z" stroke="#fff" stroke-width="1.7" fill="none" stroke-linejoin="round"/></svg>
<div class="bl" style="left:829px">React</div>
<div class="a" style="left:926px;top:969px;width:30px;height:25px;border-radius:4px;background:#1fe383"></div>
<svg class="a" style="left:932px;top:971px" width="18" height="20" viewBox="0 0 18 20"><path d="M9 3 L3 9.5 H6.5 V16 H11.5 V9.5 H15 Z" fill="#000"/></svg>
<div class="bl" style="left:941px">Share</div>
<svg class="a" style="left:1043px;top:963px" width="37" height="35" viewBox="0 0 34 32"><defs><linearGradient id="sp" x1="0" y1="0" x2="1" y2="1"><stop offset="0" stop-color="#e8f4f8"/><stop offset="0.5" stop-color="#b8dde6"/><stop offset="1" stop-color="#8ec4d4"/></linearGradient></defs><path d="M14 4 C15 12 17 14 25 16 C17 18 15 20 14 30 C13 20 11 18 3 16 C11 14 13 12 14 4 Z" fill="url(#sp)"/><path d="M26 1 C26.5 4 27 4.5 30 5 C27 5.5 26.5 6 26 9 C25.5 6 25 5.5 22 5 C25 4.5 25.5 4 26 1 Z" fill="#d8eef4"/></svg>
<div class="bl" style="left:1061px">AI Companion</div>
<svg class="a" style="left:1165px;top:965px" width="32" height="32" viewBox="0 0 32 32"><circle cx="16" cy="16" r="14.3" stroke="#fff" stroke-width="1.8" fill="none"/><circle cx="16" cy="9.5" r="1.8" fill="#fff"/><path d="M13 13.5 H16.5 V22.5 M13 22.8 H19.5" stroke="#fff" stroke-width="2" fill="none"/></svg>
<div class="bl" style="left:1181px">Meeting info</div>
<svg class="a" style="left:1278px;top:966px" width="30" height="30" viewBox="0 0 30 30"><path d="M3 11 V7 a4 4 0 0 1 4 -4 H11" stroke="#fff" stroke-width="1.8" fill="none"/><circle cx="22" cy="7" r="4.3" stroke="#fff" stroke-width="1.8" fill="none"/><circle cx="7.5" cy="22.5" r="4.3" stroke="#fff" stroke-width="1.8" fill="none"/><path d="M27 19 V23 a4 4 0 0 1 -4 4 H19" stroke="#fff" stroke-width="1.8" fill="none"/></svg>
<div class="bl" style="left:1293px">Apps</div>
<svg class="a" style="left:1378px;top:966px" width="30" height="30" viewBox="0 0 30 30"><circle cx="15" cy="15" r="13.3" stroke="#fff" stroke-width="1.8" fill="none"/><circle cx="15" cy="15" r="6" fill="#fff"/></svg>
<div class="bl" style="left:1393px">Record</div>
<svg class="a" style="left:1479px;top:966px" width="31" height="31" viewBox="0 0 31 31"><circle cx="15.5" cy="15.5" r="14" stroke="#fff" stroke-width="1.8" fill="none"/><circle cx="9" cy="15.5" r="1.7" fill="#fff"/><circle cx="15.5" cy="15.5" r="1.7" fill="#fff"/><circle cx="22" cy="15.5" r="1.7" fill="#fff"/></svg>
<div class="bl" style="left:1494px">More</div>
<svg class="a" style="left:1840px;top:964px" width="36" height="34" viewBox="0 0 36 34"><path d="M15 3 H25 M25 3 V27 L33 24" stroke="#e8175d" stroke-width="1.8" fill="none"/><circle cx="12" cy="9" r="3.6" fill="#000" stroke="#fff" stroke-width="1.7"/><path d="M8 15 C9 13 14 12.5 16 14.5 L19 20 C19.5 21.5 18 22.5 17 21.5 L15.5 19.5 L15 23 L17 30 C17.3 31.5 15.3 32 14.7 30.8 L12 25 L9.5 31 C9 32.3 6.8 31.8 7.2 30.3 L9.5 22.5 L9.2 18.5 L7.5 21.5 C6.8 22.8 5 22 5.6 20.6 Z" fill="#000" stroke="#fff" stroke-width="1.7" stroke-linejoin="round"/></svg>
<div class="bl" style="left:1858px">Leave</div>
<!-- screenrec watermark -->
<div class="a" style="left:1865px;top:876px;width:24px;height:112px;border-radius:3px;background:#242629"></div>
<div class="a" style="left:1871px;top:881px;width:12px;height:12px;border-radius:50%;background:#f01818;box-shadow:0 0 0 1.2px #242629,0 0 0 2.3px #f03030"></div>
<div class="a" style="left:1866px;top:899px;width:22px;height:100px;writing-mode:vertical-rl;font-size:22px;line-height:22px;color:#fff;white-space:nowrap;transform-origin:0 0;transform:scaleY(0.82)">screen rec</div>
</body></html>
